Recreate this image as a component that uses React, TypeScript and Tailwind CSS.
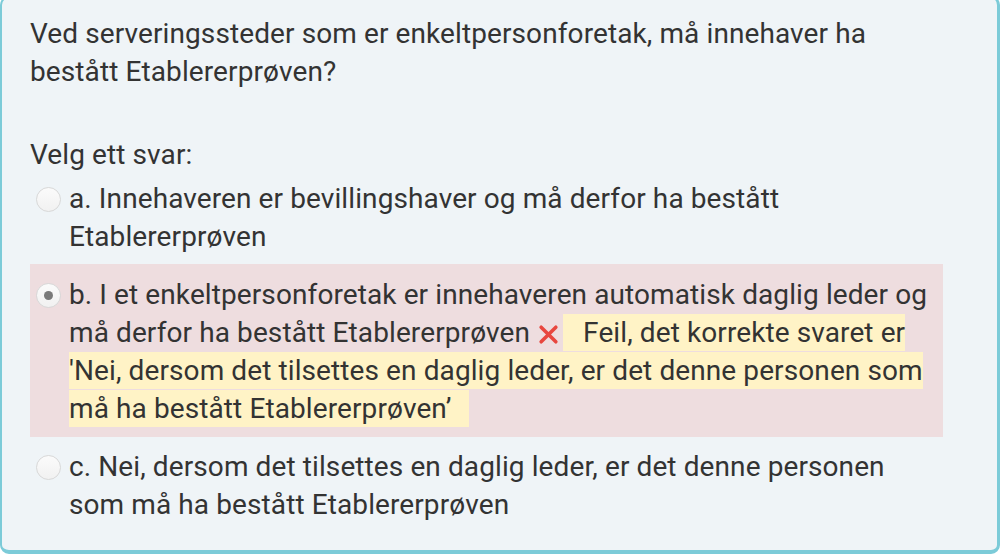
import React from 'react';

const font = { fontFamily: 'Roboto, "Noto Sans", sans-serif' };

const Radio: React.FC<{ checked?: boolean }> = ({ checked }) => (
  <span className="mt-[7px] flex h-[25px] w-[25px] shrink-0 items-center justify-center rounded-full border border-[#d8d8d8] bg-gradient-to-b from-[#fbfbfb] to-[#f1f1f1]">
    {checked && <span className="h-[9px] w-[9px] rounded-full bg-[#7a7a7a]" />}
  </span>
);

const WrongMark = () => (
  <svg viewBox="0 0 20 20" className="ml-[8px] mr-[4px] inline-block h-[21px] w-[21px] align-[-3px]">
    <path d="M3 3 L17 17 M17 3 L3 17" stroke="#e8473f" strokeWidth="3.4" strokeLinecap="round" />
  </svg>
);

export default function App() {
  return (
    <div className="h-[555px] w-[1000px] overflow-hidden bg-white" style={font}>
      <div className="-mt-[4px] h-[558px] rounded-[9px] border-l-2 border-r-[3px] border-b-4 border-t-2 border-[#7ccbd8] bg-[#eff4f7] pl-[28px] pr-[54px] pt-[17px] text-[28px] leading-[38px] tracking-[0.1px] text-[#333]">
        <p>Ved serveringssteder som er enkeltpersonforetak, må innehaver ha bestått Etablererprøven?</p>

        <p className="mt-[45px]">Velg ett svar:</p>

        <div className="mt-[6px] flex gap-[8px] pl-[6px] pr-[8px]">
          <Radio />
          <div>a. Innehaveren er bevillingshaver og må derfor ha bestått Etablererprøven</div>
        </div>

        <div className="mt-[8px] flex gap-[8px] bg-[#eedddf] pb-[9px] pl-[6px] pr-[8px] pt-[12px]">
          <Radio checked />
          <div>
            b. I et enkeltpersonforetak er innehaveren automatisk daglig leder og må derfor ha bestått Etablererprøven
            <WrongMark />
            <span className="bg-[#fff3c6] py-[2px] pl-[20px] pr-[17px]">
              Feil, det korrekte svaret er 'Nei, dersom det tilsettes en daglig leder, er det denne personen som må ha bestått Etablererprøven’
            </span>
          </div>
        </div>

        <div className="mt-[11px] flex gap-[8px] pl-[6px] pr-[8px]">
          <Radio />
          <div>c. Nei, dersom det tilsettes en daglig leder, er det denne personen som må ha bestått Etablererprøven</div>
        </div>
      </div>
    </div>
  );
}
